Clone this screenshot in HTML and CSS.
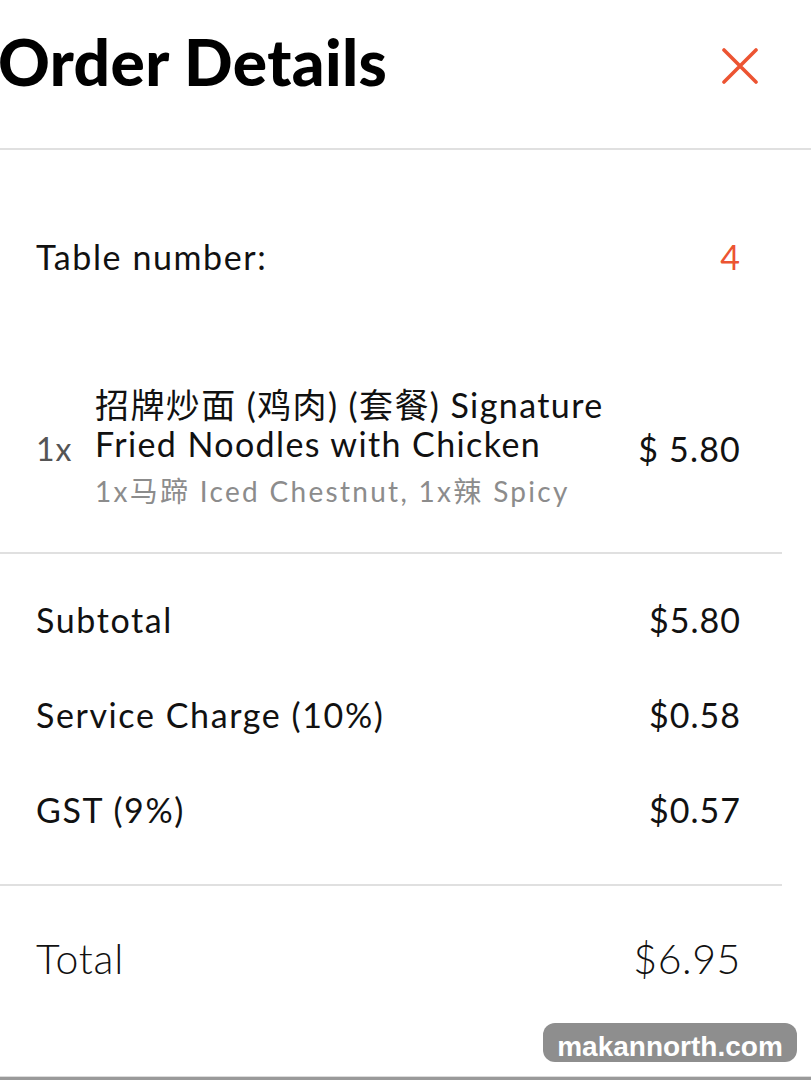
FILE: index.html
```html
<!DOCTYPE html>
<html lang="en">
<head>
<meta charset="utf-8">
<title>Order Details</title>
<link rel="stylesheet" href="styles.css">
</head>
<body>
<div class="page">
  <header class="header">
    <h1 class="title">Order Details</h1>
    <button class="close" aria-label="Close">
      <svg width="36" height="36" viewBox="0 0 36 36"><path d="M2 2 L34 34 M34 2 L2 34" stroke="#ec5432" stroke-width="3.6" stroke-linecap="round" fill="none"/></svg>
    </button>
  </header>
  <div class="divider divider-full"></div>

  <div class="row table-row">
    <span class="label">Table number:</span>
    <span class="value accent">4</span>
  </div>

  <div class="item">
    <span class="qty">1x</span>
    <div class="item-info">
      <div class="item-name">招牌炒面 (鸡肉) (套餐) Signature Fried Noodles with Chicken</div>
      <div class="item-options">1x马蹄 Iced Chestnut, 1x辣 Spicy</div>
    </div>
    <span class="item-price">$ 5.80</span>
  </div>

  <div class="divider"></div>

  <div class="summary">
    <div class="row"><span class="label">Subtotal</span><span class="value">$5.80</span></div>
    <div class="row"><span class="label">Service Charge (10%)</span><span class="value">$0.58</span></div>
    <div class="row"><span class="label">GST (9%)</span><span class="value">$0.57</span></div>
  </div>

  <div class="divider"></div>

  <div class="row total-row">
    <span class="label">Total</span>
    <span class="value">$6.95</span>
  </div>

  <div class="watermark">makannorth.com</div>
  <div class="bottom-bar"></div>
</div>
</body>
</html>
```

FILE: styles.css
```css
* { box-sizing: border-box; }
html, body {
  margin: 0;
  padding: 0;
  background: #ffffff;
}
body {
  font-family: Lato, "Noto Sans CJK SC", sans-serif;
  color: #111111;
  overflow: hidden;
}
.page {
  position: relative;
  width: 811px;
  height: 1080px;
  display: flex;
  flex-direction: column;
}
.header {
  height: 148px;
  display: flex;
  align-items: flex-start;
  justify-content: space-between;
  padding: 28px 53px 0 0;
}
.title {
  margin: 0 0 0 -2px;
  font-size: 64px;
  line-height: 68px;
  font-weight: 900;
  color: #000;
  letter-spacing: 0.4px;
}
.close {
  margin-top: 20px;
  padding: 0;
  border: 0;
  background: none;
  width: 36px;
  height: 36px;
  line-height: 0;
}
.divider {
  height: 2px;
  background: #e0e0e0;
  width: 782px;
  flex: none;
}
.divider-full { width: 811px; }
.row {
  display: flex;
  justify-content: space-between;
  align-items: center;
  padding: 0 71px 0 36px;
  font-size: 34px;
  line-height: 40px;
  letter-spacing: 1.6px;
}
.row .value { letter-spacing: 1px; margin-right: -1px; }
.table-row {
  margin-top: 87px;
}
.accent { color: #ec5432; }
.item {
  display: flex;
  align-items: center;
  margin-top: 108px;
  padding: 0 71px 0 36px;
}
.qty {
  font-size: 32px;
  letter-spacing: 1px;
  color: #555;
  width: 59px;
  flex: none;
  padding-top: 4px;
}
.item-info { flex: 1; }
.item-name {
  font-size: 34px;
  line-height: 39px;
  letter-spacing: 1.4px;
  width: 540px;
}
.item-options {
  margin-top: 11px;
  font-size: 28px;
  line-height: 34px;
  letter-spacing: 2.3px;
  color: #8c8c8c;
}
.item-price {
  font-size: 34px;
  letter-spacing: 1.2px;
  margin-right: -1px;
  padding-top: 4px;
}
.item + .divider { margin-top: 44px; }
.summary {
  display: flex;
  flex-direction: column;
  gap: 55px;
  padding: 46px 0 54px;
}
.total-row {
  margin-top: 51px;
  font-size: 41px;
  line-height: 44px;
  font-weight: 300;
  letter-spacing: 0.8px;
}
.total-row .value { letter-spacing: 0.6px; }
.watermark {
  position: absolute;
  left: 543px;
  top: 1023px;
  width: 254px;
  height: 39px;
  border-radius: 12px;
  background: #8e8e8e;
  color: #fff;
  font-family: "Liberation Sans", Arial, sans-serif;
  font-weight: 700;
  font-size: 28px;
  line-height: 48px;
  text-align: center;
  overflow: hidden;
}
.bottom-bar {
  position: absolute;
  left: 0;
  bottom: 0;
  width: 811px;
  height: 4px;
  background: #9a9a9a;
  border-top: 1px solid #dcdcdc;
}
```
